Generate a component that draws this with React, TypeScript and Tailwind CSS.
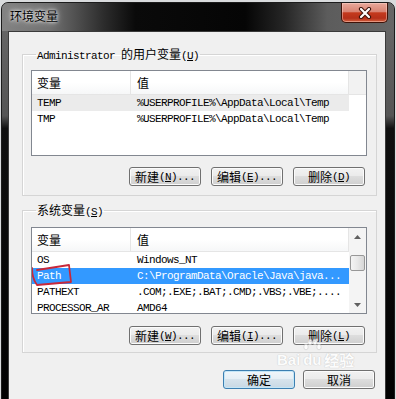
import React from "react";

/* Windows 7 "环境变量" dialog */

const mono = "font-['Liberation_Mono',monospace] text-[11px] tracking-[-0.6px]";
const cjk = "font-['Noto_Sans_CJK_SC',sans-serif] text-[12px]";

function Btn({
  zh,
  hot,
  dots,
  primary,
}: {
  zh: string;
  hot?: string;
  dots?: boolean;
  primary?: boolean;
}) {
  return (
    <button
      className={
        "flex h-[19px] w-[72px] items-center justify-center rounded-[3px] border leading-[14px] text-black " +
        (primary
          ? "border-[#3c7fb1] bg-[linear-gradient(180deg,#f0f6fa_0%,#e6eff5_45%,#d6e3ec_50%,#c8d8e4_100%)] shadow-[inset_0_0_0_1px_#c4e6f7]"
          : "border-[#707070] bg-[linear-gradient(180deg,#f2f2f2_0%,#ebebeb_45%,#dddddd_50%,#cfcfcf_100%)] shadow-[inset_0_0_0_1px_#fbfbfb]")
      }
    >
      <span className={cjk}>{zh}</span>
      {hot && (
        <span className={mono}>
          (<u>{hot}</u>){dots ? "..." : ""}
        </span>
      )}
    </button>
  );
}

function Header() {
  return (
    <div className="flex h-[24px] border-b border-[#e5e5e5] bg-[linear-gradient(180deg,#ffffff_0%,#ffffff_50%,#f6f7f8_100%)]">
      <div className={`flex w-[99px] items-center border-r border-[#e5e5e5] pl-[5px] ${cjk}`}>变量</div>
      <div className={`flex w-[218px] items-center border-r border-[#e5e5e5] pl-[6px] ${cjk}`}>值</div>
    </div>
  );
}

function Row({ name, value, sel }: { name: string; value: string; sel?: "gray" | "blue" }) {
  const bg = sel === "gray" ? "bg-[#ebebeb] text-black" : sel === "blue" ? "bg-[#3399ff] text-white" : "text-black";
  return (
    <div className={`flex h-[16px] w-[317px] items-center leading-[14px] ${mono} ${bg}`}>
      <div className="w-[99px] overflow-hidden whitespace-nowrap pl-[5px]">{name}</div>
      <div className="whitespace-nowrap pl-[6px]">{value}</div>
    </div>
  );
}

function Group({ children, legend }: { children: React.ReactNode; legend: React.ReactNode }) {
  return (
    <fieldset className="w-[355px] border border-[#d5d5d5] shadow-[inset_1px_1px_0_#ffffff] pl-[8px] pr-[9px]">
      <legend className="ml-[5px] px-[1px] leading-[14px] text-black">{legend}</legend>
      {children}
    </fieldset>
  );
}

export default function App() {
  return (
    <div className="h-[399px] w-[396px] overflow-hidden bg-[#d9dbdd] pt-[2px]">
      <div className="ml-[1px] flex h-[420px] w-[394px] flex-col rounded-t-[7px] border border-[#1c1c1c] bg-[linear-gradient(180deg,#6a6a6a_0%,#555555_27%,#101010_30%,#000000_100%)]">
        {/* title bar */}
        <div className="flex h-[28px] justify-between rounded-t-[6px] bg-[linear-gradient(90deg,#838383_0%,#727272_12%,#2c2c2c_26%,#0a0a0a_34%,#050505_62%,#262626_72%,#5c5c5c_83%,#666666_100%)]">
          <div className={`pl-[8px] pt-[5px] leading-[16px] text-black [text-shadow:0_0_6px_#ffffff,0_0_3px_#ffffff] ${cjk}`}>
            环境变量
          </div>
          <div className="mr-[6px] flex h-[20px] w-[47px] items-center justify-center rounded-b-[5px] border border-t-0 border-[#3e1208] bg-[linear-gradient(180deg,#e9a99b_0%,#d98474_45%,#c4391d_52%,#b5301a_80%,#d3613f_100%)] shadow-[inset_0_0_0_1px_rgba(255,220,210,0.45)]">
            <svg width="14" height="12" viewBox="0 0 14 12">
              <path d="M3 2 L11 10 M11 2 L3 10" stroke="#3a1008" strokeWidth="4.2" strokeLinecap="round" />
              <path d="M3 2 L11 10 M11 2 L3 10" stroke="#ffffff" strokeWidth="2.2" strokeLinecap="round" />
            </svg>
          </div>
        </div>

        {/* client */}
        <div className="flex flex-1 pl-[6px] pr-[8px]">
          <div className="relative flex-1 border border-[#3a3a3a] bg-[#f0f0f0] pl-[13px] pt-[14px]">
            <Group
              legend={
                <>
                  <span className={mono}>Administrator </span>
                  <span className={cjk}>的用户变量</span>
                  <span className={mono}>
                    (<u>U</u>)
                  </span>
                </>
              }
            >
              <div className="mt-[7px] h-[86px] w-[336px] border border-[#828790] bg-white">
                <div className="flex">
                  <Header />
                  <div className="h-[24px] flex-1 border-b border-[#e5e5e5] bg-[#f2f2f2]" />
                </div>
                <Row name="TEMP" value={"%USERPROFILE%\\AppData\\Local\\Temp"} sel="gray" />
                <Row name="TMP" value={"%USERPROFILE%\\AppData\\Local\\Temp"} />
              </div>
              <div className="mr-[2px] mt-[11px] mb-[9px] flex justify-end gap-[10px]">
                <Btn zh="新建" hot="N" dots />
                <Btn zh="编辑" hot="E" dots />
                <Btn zh="删除" hot="D" />
              </div>
            </Group>

            <div className="mt-[6px]">
              <Group
                legend={
                  <>
                    <span className={cjk}>系统变量</span>
                    <span className={mono}>
                      (<u>S</u>)
                    </span>
                  </>
                }
              >
                <div className="relative mt-[8px] flex h-[87px] w-[336px] overflow-hidden border border-[#828790] bg-white">
                  <div className="w-[317px]">
                    <Header />
                    <Row name="OS" value="Windows_NT" />
                    <Row name="Path" value={"C:\\ProgramData\\Oracle\\Java\\java..."} sel="blue" />
                    <Row name="PATHEXT" value=".COM;.EXE;.BAT;.CMD;.VBS;.VBE;...." />
                    <Row name="PROCESSOR_AR" value="AMD64" />
                  </div>
                  {/* scrollbar */}
                  <div className="flex w-[17px] flex-col bg-[#f4f4f4]">
                    <div className="flex h-[17px] items-center justify-center">
                      <svg width="7" height="4" viewBox="0 0 7 4">
                        <path d="M0 4 L3.5 0 L7 4 Z" fill="#606060" />
                      </svg>
                    </div>
                    <div className="flex-1 px-[1px] pt-[10px]">
                      <div className="h-[16px] rounded-[2px] border border-[#979797] bg-[linear-gradient(90deg,#f4f4f4_0%,#e8e8e8_50%,#d6d6d6_100%)]" />
                    </div>
                    <div className="flex h-[17px] items-center justify-center">
                      <svg width="7" height="4" viewBox="0 0 7 4">
                        <path d="M0 0 L3.5 4 L7 0 Z" fill="#606060" />
                      </svg>
                    </div>
                  </div>
                  {/* red hand-drawn mark */}
                  <svg
                    className="pointer-events-none absolute left-[-3px] top-[34px]"
                    width="46"
                    height="28"
                    viewBox="0 0 46 28"
                  >
                    <path
                      d="M3 6 C3 13 5 19 8 23 L42 20 L40 3 L8 8"
                      fill="none"
                      stroke="#c8283a"
                      strokeWidth="1.8"
                      strokeLinejoin="round"
                      strokeLinecap="round"
                    />
                  </svg>
                </div>
                <div className="mr-[2px] mt-[12px] mb-[7px] flex justify-end gap-[10px]">
                  <Btn zh="新建" hot="W" dots />
                  <Btn zh="编辑" hot="I" dots />
                  <Btn zh="删除" hot="L" />
                </div>
              </Group>
            </div>

            <div className="mt-[17px] flex justify-end gap-[8px] pr-[10px]">
              <Btn zh="确定" primary />
              <Btn zh="取消" />
            </div>

            {/* watermark */}
            <div className="pointer-events-none absolute left-[268px] top-[306px] flex items-end gap-[2px] text-white opacity-80 [text-shadow:0_0_1px_#c4c4c4,0_0_1px_#c4c4c4]">
              <span className="font-['Liberation_Sans',sans-serif] text-[15px] font-bold leading-[16px]">Bai</span>
              <span className="relative flex flex-col items-center">
                <svg width="20" height="14" viewBox="0 0 20 14">
                  <g fill="#ffffff" stroke="#cfcfcf" strokeWidth="0.8">
                    <ellipse cx="4" cy="9" rx="2.2" ry="2.8" />
                    <ellipse cx="8" cy="4" rx="2.2" ry="2.8" />
                    <ellipse cx="13" cy="4" rx="2.2" ry="2.8" />
                    <ellipse cx="17" cy="9" rx="2.2" ry="2.8" />
                  </g>
                </svg>
                <span className="font-['Liberation_Sans',sans-serif] text-[15px] font-bold leading-[16px]">du</span>
              </span>
              <span className="font-['Noto_Sans_CJK_SC',sans-serif] text-[15px] font-bold leading-[16px]">经验</span>
            </div>
          </div>
        </div>
      </div>
    </div>
  );
}
